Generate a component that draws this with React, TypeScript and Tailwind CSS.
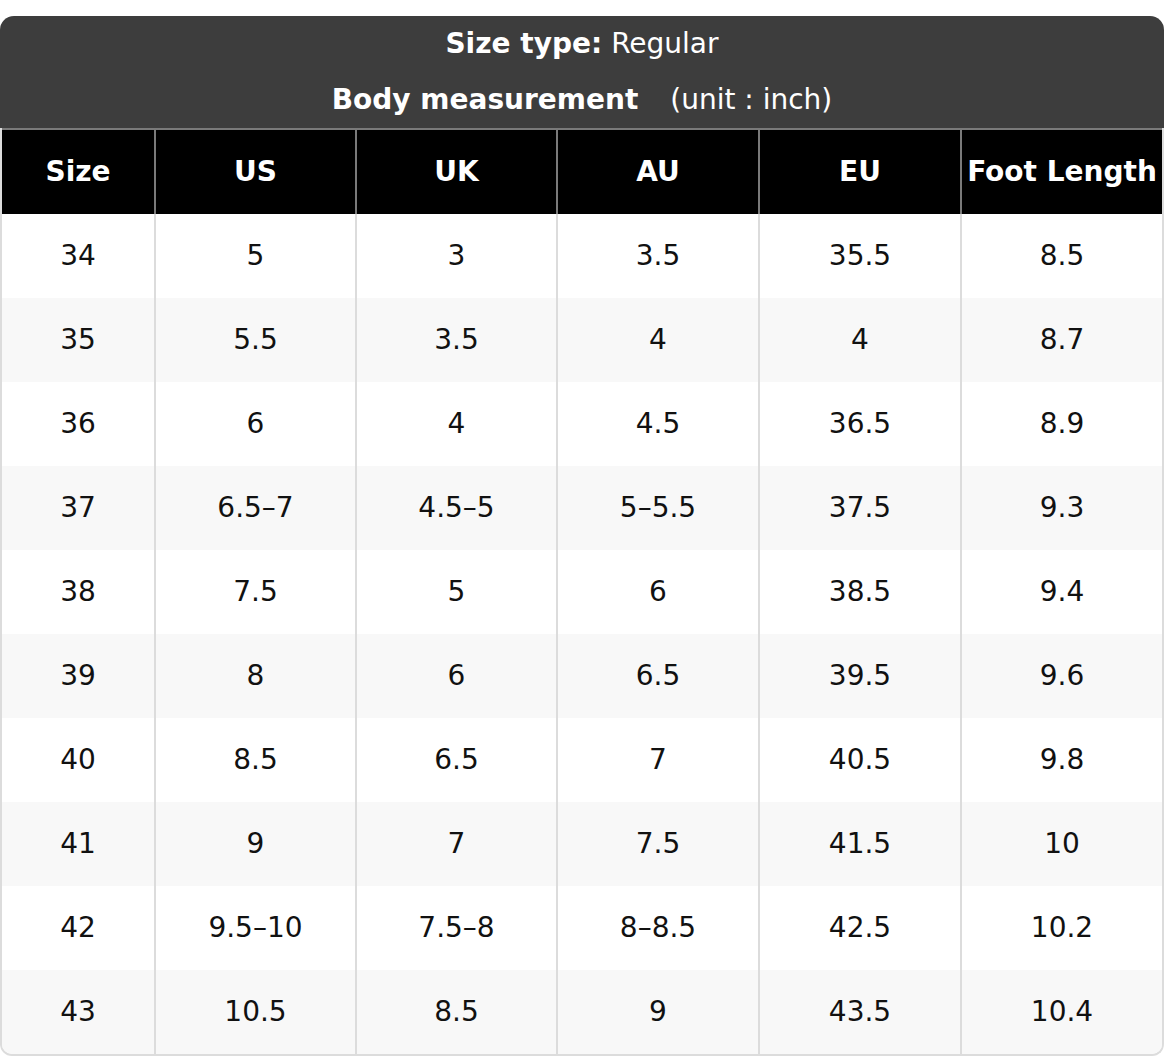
import React from 'react';

const columns = ['Size', 'US', 'UK', 'AU', 'EU', 'Foot Length'];

const rows: string[][] = [
  ['34', '5', '3', '3.5', '35.5', '8.5'],
  ['35', '5.5', '3.5', '4', '4', '8.7'],
  ['36', '6', '4', '4.5', '36.5', '8.9'],
  ['37', '6.5–7', '4.5–5', '5–5.5', '37.5', '9.3'],
  ['38', '7.5', '5', '6', '38.5', '9.4'],
  ['39', '8', '6', '6.5', '39.5', '9.6'],
  ['40', '8.5', '6.5', '7', '40.5', '9.8'],
  ['41', '9', '7', '7.5', '41.5', '10'],
  ['42', '9.5–10', '7.5–8', '8–8.5', '42.5', '10.2'],
  ['43', '10.5', '8.5', '9', '43.5', '10.4'],
];

const gridCols = 'grid grid-cols-[152px_201px_201px_202px_202px_1fr]';

const App = () => {
  return (
    <div className="w-[1164px] bg-white pt-4 text-[28px] text-[#111] font-['DejaVu_Sans',sans-serif]">
      {/* Title block */}
      <div className="rounded-t-[14px] bg-[#3d3d3d] text-white">
        <div className="flex h-[55px] items-center justify-center">
          <span className="font-bold">Size type:</span>
          <span className="ml-[9px]">Regular</span>
        </div>
        <div className="flex h-[57px] items-center justify-center">
          <span className="font-bold">Body measurement</span>
          <span className="ml-[32px]">(unit : inch)</span>
        </div>
      </div>

      {/* Table */}
      <div className="overflow-hidden rounded-b-[12px] border-x-2 border-b-2 border-[#dcdcdc]">
        <div className={`${gridCols} h-[86px] border-t-2 border-[#7a7a7a] bg-black text-white font-bold`}>
          {columns.map((c, i) => (
            <div
              key={c}
              className={`flex items-center justify-center whitespace-nowrap ${i > 0 ? 'border-l-2 border-[#7a7a7a]' : ''}`}
            >
              {c}
            </div>
          ))}
        </div>
        {rows.map((r, ri) => (
          <div key={r[0]} className={`${gridCols} h-[84px] ${ri % 2 === 1 ? 'bg-[#f8f8f8]' : 'bg-white'}`}>
            {r.map((v, i) => (
              <div
                key={i}
                className={`flex items-center justify-center ${i > 0 ? 'border-l-2 border-[#dcdcdc]' : ''}`}
              >
                {v}
              </div>
            ))}
          </div>
        ))}
      </div>
    </div>
  );
};

export default App;
